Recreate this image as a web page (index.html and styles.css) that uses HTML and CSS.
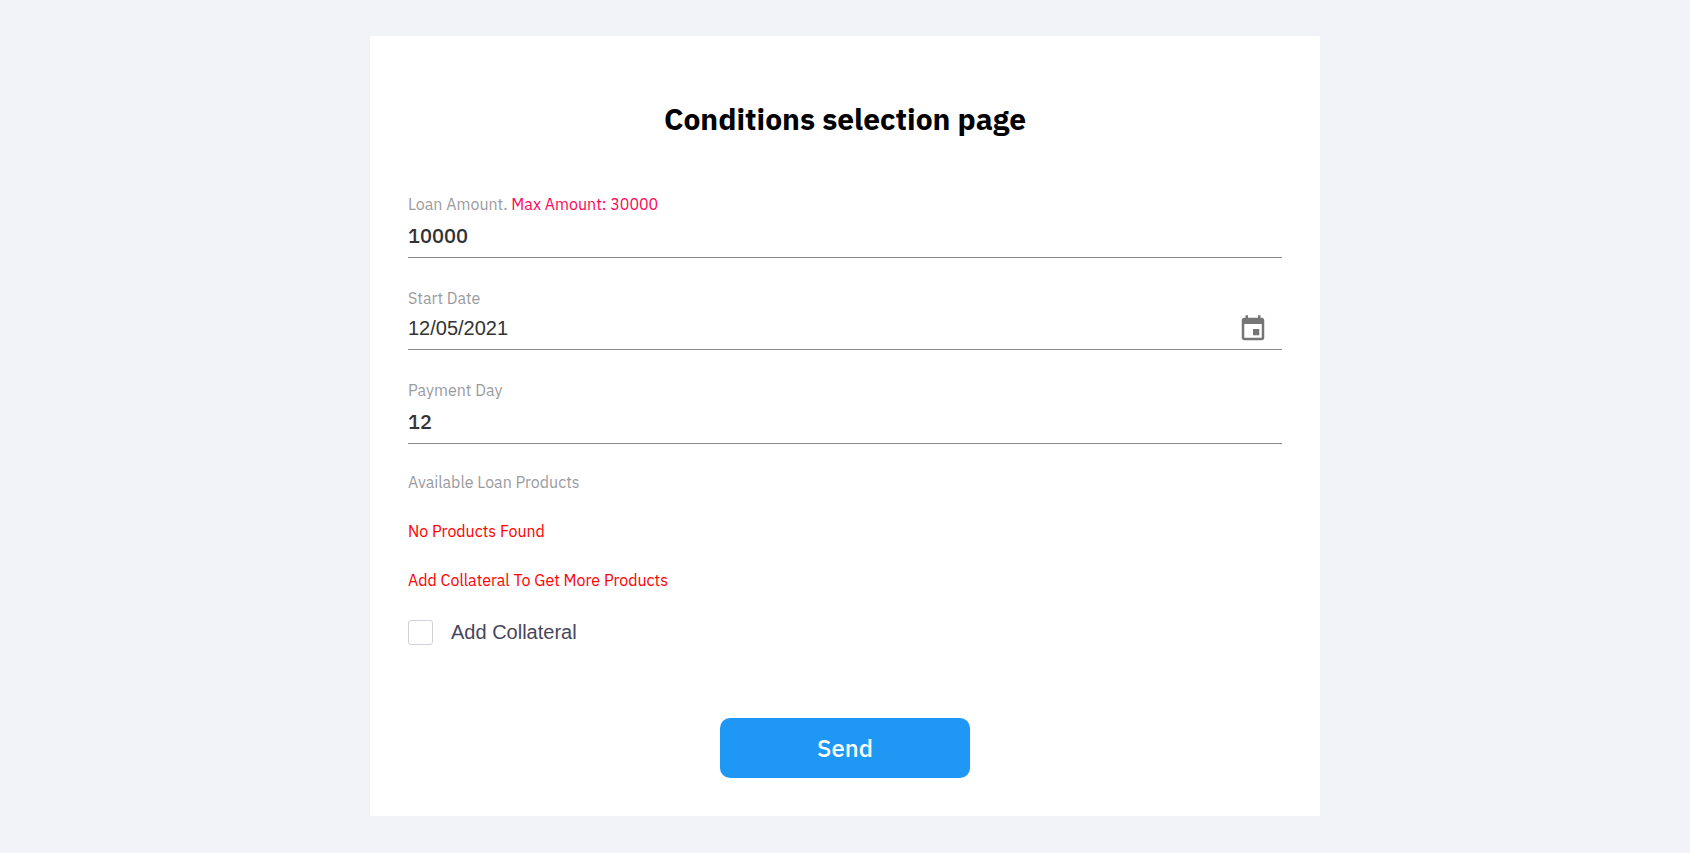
FILE: index.html
```
<!DOCTYPE html>
<html lang="en">
<head>
<meta charset="utf-8">
<meta name="viewport" content="width=device-width, initial-scale=1">
<title>Conditions selection page</title>
<link rel="stylesheet" href="styles.css">
</head>
<body>
<main class="card">
  <h1 class="title">Conditions selection page</h1>
  <form class="form">
    <div class="field">
      <label class="label" for="amount">Loan Amount. <span class="limit">Max Amount: 30000</span></label>
      <input class="input" id="amount" type="text" inputmode="numeric" value="10000">
    </div>
    <div class="field">
      <label class="label" for="start">Start Date</label>
      <div class="date-row">
        <input class="date-input" id="start" type="text" value="12/05/2021">
        <button class="date-button" type="button" aria-label="Choose date">
          <svg class="date-icon" viewBox="0 0 24 24" aria-hidden="true"><path d="M17 12h-5v5h5v-5zM16 1v2H8V1H6v2H5c-1.11 0-1.99.9-1.99 2L3 19c0 1.1.89 2 2 2h14c1.1 0 2-.9 2-2V5c0-1.1-.9-2-2-2h-1V1h-2zm3 18H5V8h14v11z"/></svg>
        </button>
      </div>
    </div>
    <div class="field">
      <label class="label" for="day">Payment Day</label>
      <input class="input" id="day" type="text" inputmode="numeric" value="12">
    </div>
    <div class="products">
      <p class="label">Available Loan Products</p>
      <p class="label warning">No Products Found</p>
      <p class="label warning">Add Collateral To Get More Products</p>
    </div>
    <label class="check-row"><input class="check" type="checkbox">Add Collateral</label>
    <button class="send" type="submit">Send</button>
  </form>
</main>
</body>
</html>
```
FILE: styles.css
```
* {
  box-sizing: border-box;
}

body {
  margin: 0;
  padding: 36px 20px;
  background: #f2f3f8;
  font-family: "IBM Plex Sans", "Open Sans", sans-serif;
}

.card {
  max-width: 950px;
  margin: 0 auto;
  padding: 63px 38px 38px;
  background: #fff;
}

.title {
  margin: 0 0 55px;
  color: #000;
  font-size: 30px;
  font-weight: 700;
  line-height: 40px;
  text-align: center;
}

.form {
  display: flex;
  flex-direction: column;
}

.field {
  display: flex;
  flex-direction: column;
  margin-bottom: 30px;
}

.label {
  margin: 0;
  color: #9b9b9f;
  font-size: 16px;
  font-weight: 400;
  line-height: 20px;
}

.limit {
  color: #fd0658;
}

.input,
.date-input {
  width: 100%;
  border: 0;
  background: transparent;
  color: #333;
  font-size: 20px;
  outline: 0;
}

.input {
  height: 44px;
  padding: 0;
  border-bottom: 1px solid #898989;
  font-family: inherit;
  font-weight: 500;
}

.date-row {
  display: flex;
  align-items: center;
  height: 42px;
  padding-right: 14px;
  border-bottom: 1px solid #898989;
}

.date-input {
  flex: 1;
  padding: 0;
  font-family: "Liberation Sans", Arial, sans-serif;
}

.date-button {
  display: flex;
  padding: 0;
  border: 0;
  background: none;
  cursor: pointer;
}

.date-icon {
  width: 30px;
  height: 30px;
  fill: #757575;
}

.products {
  display: flex;
  flex-direction: column;
  gap: 29px;
  margin: -2px 0 30px;
}

.warning {
  color: #f00;
}

.check-row {
  display: flex;
  align-items: center;
  align-self: flex-start;
  gap: 18px;
  color: #48465b;
  font-family: "Liberation Sans", Arial, sans-serif;
  font-size: 20px;
  line-height: 25px;
}

.check {
  width: 25px;
  height: 25px;
  margin: 0;
  border: 1px solid #d1d1da;
  border-radius: 3px;
  background: #fff;
  appearance: none;
}

.check:checked {
  background: #1e98f4;
}

.send {
  align-self: center;
  width: 250px;
  height: 60px;
  margin-top: 73px;
  border: 0;
  border-radius: 10px;
  background: #1e98f4;
  color: #fff;
  font-family: inherit;
  font-size: 24px;
  font-weight: 500;
  cursor: pointer;
}
```
